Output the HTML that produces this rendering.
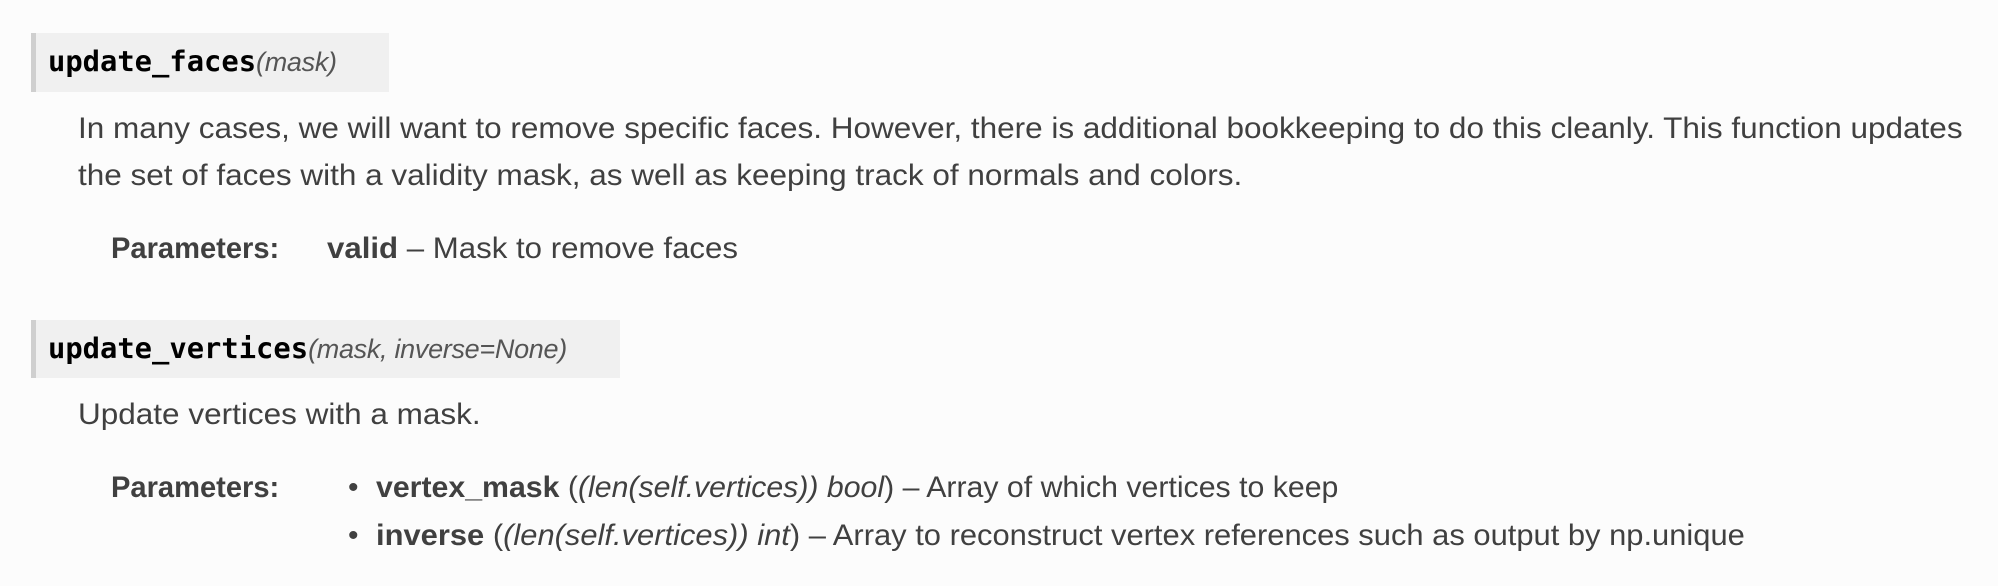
<!DOCTYPE html>
<html><head><meta charset="utf-8"><style>
html,body{margin:0;padding:0}
body{width:1998px;height:586px;background:#fcfcfc;position:relative;overflow:hidden;font-family:"Liberation Sans",sans-serif;color:#404040}
.box{position:absolute;left:31px;background:#f0f0f0;border-left:5px solid #cfcfcf;box-sizing:border-box}
.l{position:absolute;white-space:nowrap;font-size:30px;line-height:1;transform-origin:0 0}
.m{font-family:"DejaVu Sans Mono","Liberation Mono",monospace;font-weight:bold;color:#000;font-size:28.8px}
.a{font-style:italic;color:#555;font-size:27px;letter-spacing:-0.3px}
b{color:#404040}
</style></head><body>
<div class="box" style="top:33px;width:358px;height:59px"></div>
<div class="l" style="left:48px;top:47px"><span class="m">update_faces</span><span class="a">(mask)</span></div>
<div class="l" style="left:78px;top:114px;transform:scaleX(1.05)">In many cases, we will want to remove specific faces. However, there is additional bookkeeping to do this cleanly. This function updates</div>
<div class="l" style="left:78px;top:161px;transform:scaleX(1.05)">the set of faces with a validity mask, as well as keeping track of normals and colors.</div>
<div class="l" style="left:111px;top:234px;transform:scaleX(0.97)"><b>Parameters:</b></div>
<div class="l" style="left:327px;top:234px;transform:scaleX(1.04)"><b>valid</b> – Mask to remove faces</div>
<div class="box" style="top:320px;width:589px;height:58px"></div>
<div class="l" style="left:48px;top:334px"><span class="m">update_vertices</span><span class="a">(mask, inverse=None)</span></div>
<div class="l" style="left:78px;top:400px;transform:scaleX(1.05)">Update vertices with a mask.</div>
<div class="l" style="left:111px;top:473px;transform:scaleX(0.97)"><b>Parameters:</b></div>
<div class="l" style="left:348px;top:473px">•</div>
<div class="l" style="left:376px;top:473px;transform:scaleX(1.009)"><b>vertex_mask</b> (<i>(len(self.vertices)) bool</i>) – Array of which vertices to keep</div>
<div class="l" style="left:348px;top:521px">•</div>
<div class="l" style="left:376px;top:521px;transform:scaleX(1.03)"><b>inverse</b> (<i>(len(self.vertices)) int</i>) – Array to reconstruct vertex references such as output by np.unique</div>
</body></html>
